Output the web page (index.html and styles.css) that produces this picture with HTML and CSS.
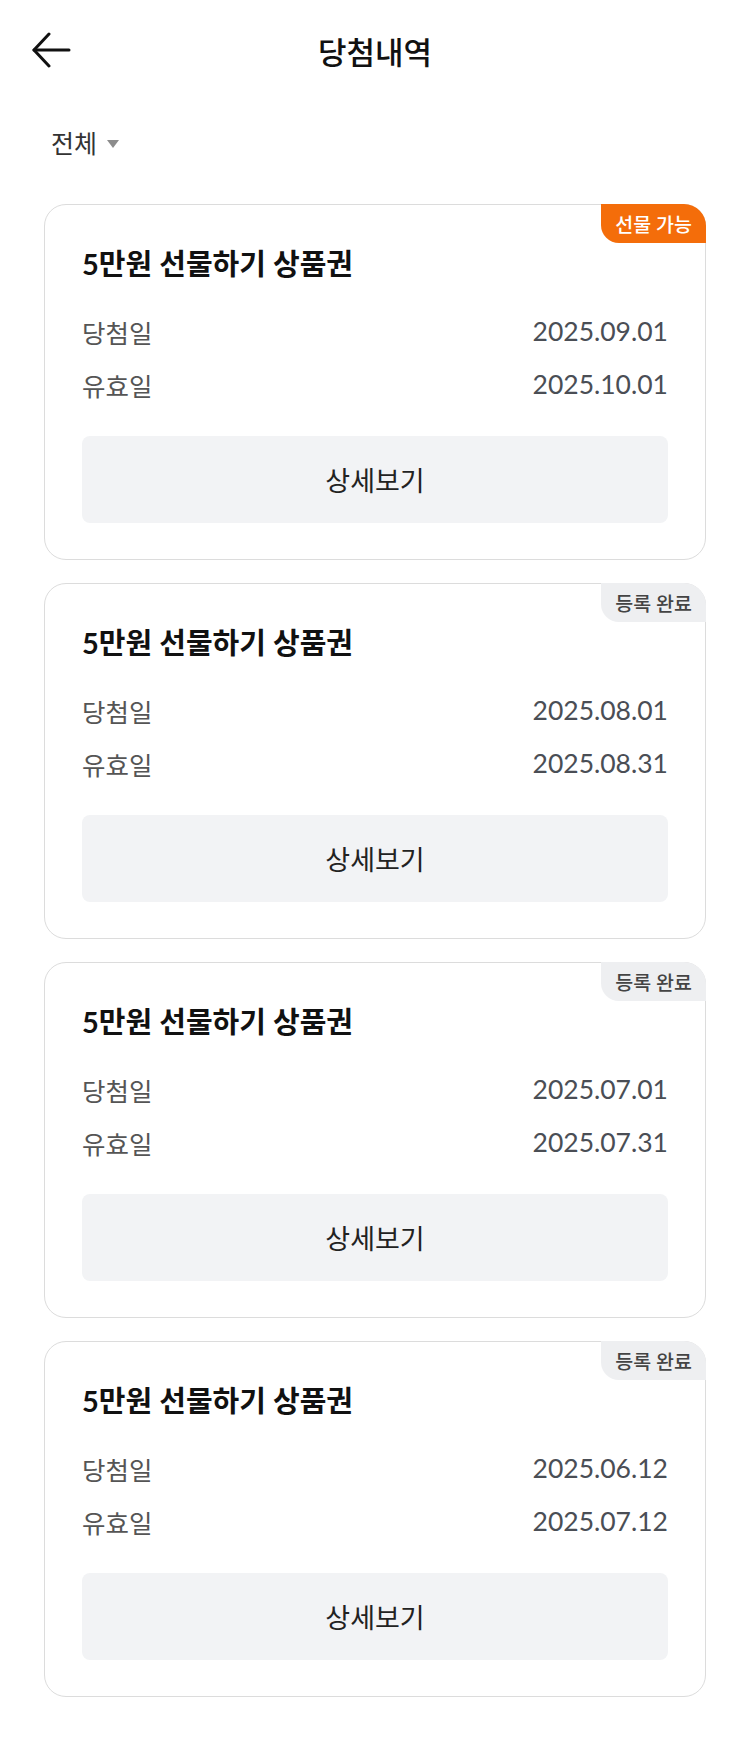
FILE: index.html
```html
<!DOCTYPE html>
<html lang="ko">
<head>
  <meta charset="UTF-8" />
  <meta name="viewport" content="width=device-width, initial-scale=1" />
  <title>당첨내역</title>
  <link rel="stylesheet" href="styles.css">
</head>
<body>

  <!-- HEADER -->
  <header class="top-bar">
    <a class="back-btn" href="#">
      <svg width="40" height="36" viewBox="0 0 40 36" fill="none" stroke="#111" stroke-width="3" stroke-linecap="round" stroke-linejoin="round">
        <path d="M3 18 H38" />
        <path d="M18 2 L3 18 L18 34" />
      </svg>
    </a>
    <h1>당첨내역</h1>
    <div></div>
  </header>

  <!-- FILTRO -->
  <div class="filter">
    <span class="filter-label">전체</span>
    <span class="caret"></span>
  </div>

  <!-- LISTA -->
  <main class="prize-list">
    <div class="prize-card">
      <span class="badge badge-gift">선물 가능</span>
      <h2>5만원 선물하기 상품권</h2>
      <div class="row"><span class="label">당첨일</span><span class="date">2025.09.01</span></div>
      <div class="row"><span class="label">유효일</span><span class="date">2025.10.01</span></div>
      <button class="detail-btn">상세보기</button>
    </div>

    <div class="prize-card">
      <span class="badge badge-done">등록 완료</span>
      <h2>5만원 선물하기 상품권</h2>
      <div class="row"><span class="label">당첨일</span><span class="date">2025.08.01</span></div>
      <div class="row"><span class="label">유효일</span><span class="date">2025.08.31</span></div>
      <button class="detail-btn">상세보기</button>
    </div>

    <div class="prize-card">
      <span class="badge badge-done">등록 완료</span>
      <h2>5만원 선물하기 상품권</h2>
      <div class="row"><span class="label">당첨일</span><span class="date">2025.07.01</span></div>
      <div class="row"><span class="label">유효일</span><span class="date">2025.07.31</span></div>
      <button class="detail-btn">상세보기</button>
    </div>

    <div class="prize-card">
      <span class="badge badge-done">등록 완료</span>
      <h2>5만원 선물하기 상품권</h2>
      <div class="row"><span class="label">당첨일</span><span class="date">2025.06.12</span></div>
      <div class="row"><span class="label">유효일</span><span class="date">2025.07.12</span></div>
      <button class="detail-btn">상세보기</button>
    </div>
  </main>

</body>
</html>
```

FILE: styles.css
```css
/* Reset */
* {
  margin: 0; padding: 0; box-sizing: border-box;
}
body, html {
  font-family: Lato, 'Noto Sans CJK KR', sans-serif;
  background: #fff;
  color: #111;
}
/* HEADER */
.top-bar {
  height: 100px;
  display: grid;
  grid-template-columns: 1fr auto 1fr;
  align-items: center;
}
.back-btn {
  display: flex;
  align-items: center;
  padding-left: 31px;
}
.top-bar h1 {
  font-size: 31px;
  font-weight: 500;
  color: #111;
  letter-spacing: 0;
}
/* FILTRO */
.filter {
  height: 84px;
  display: flex;
  align-items: center;
  gap: 10px;
  padding-left: 51px;
}
.filter-label {
  font-size: 25px;
  color: #333;
}
.caret {
  width: 0;
  height: 0;
  border-left: 6.5px solid transparent;
  border-right: 6.5px solid transparent;
  border-top: 8px solid #8c8c8c;
  margin-top: 3px;
}
/* TARJETAS */
.prize-list {
  display: flex;
  flex-direction: column;
  gap: 23px;
  padding: 20px 44px 40px;
}
.prize-card {
  position: relative;
  border: 1px solid #dcdcdc;
  border-radius: 22px;
  padding: 40px 37px 36px;
  display: flex;
  flex-direction: column;
}
.prize-card h2 {
  font-size: 29px;
  font-weight: 700;
  line-height: 38px;
  color: #111;
  margin-bottom: 28px;
}
.row {
  display: flex;
  justify-content: space-between;
  align-items: center;
  height: 40px;
}
.row + .row {
  margin-top: 13px;
}
.label {
  font-size: 25.5px;
  color: #555;
}
.date {
  font-size: 26.5px;
  color: #4a4e55;
}
.detail-btn {
  margin-top: 32px;
  height: 87px;
  border: none;
  border-radius: 8px;
  background: #f2f3f5;
  font-family: inherit;
  font-size: 27px;
  color: #222;
  cursor: pointer;
}
/* BADGES */
.badge {
  position: absolute;
  top: -1px;
  right: -1px;
  height: 39px;
  padding: 0 14px;
  display: flex;
  align-items: center;
  font-size: 19.5px;
  font-weight: 500;
  border-radius: 0 22px 0 18px;
}
.badge-gift {
  background: #f46d0a;
  color: #fff;
}
.badge-done {
  background: #eeeff1;
  color: #444;
}
```
